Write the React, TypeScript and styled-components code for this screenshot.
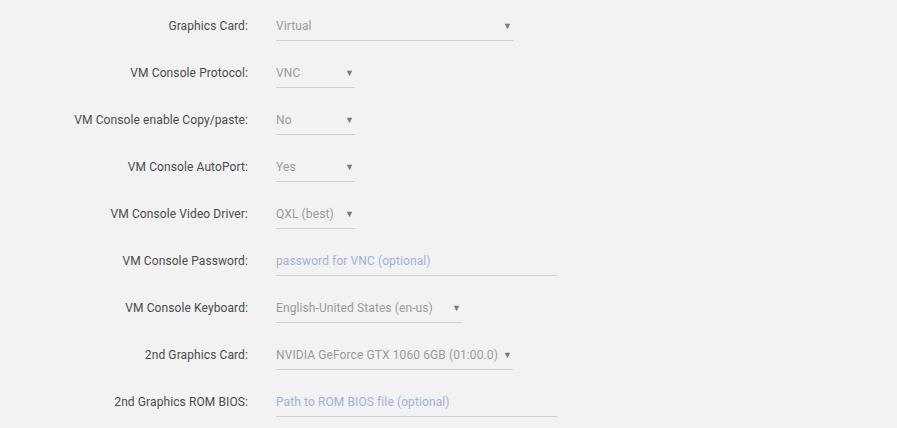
import React, { FC } from "react";
import styled, { createGlobalStyle } from "styled-components";

const GlobalStyle = createGlobalStyle`
  html, body {
    margin: 0;
    padding: 0;
    background: #f2f2f2;
  }
  body {
    font-family: Roboto, "Liberation Sans", Arial, sans-serif;
    font-size: 12px;
    letter-spacing: 0.1px;
  }
`;

interface Field {
  label: string;
  kind: "select" | "input";
  value: string;
  width: number;
}

const fields: Field[] = [
  { label: "Graphics Card:", kind: "select", value: "Virtual", width: 237 },
  { label: "VM Console Protocol:", kind: "select", value: "VNC", width: 79 },
  { label: "VM Console enable Copy/paste:", kind: "select", value: "No", width: 79 },
  { label: "VM Console AutoPort:", kind: "select", value: "Yes", width: 79 },
  { label: "VM Console Video Driver:", kind: "select", value: "QXL (best)", width: 79 },
  { label: "VM Console Password:", kind: "input", value: "password for VNC (optional)", width: 281 },
  { label: "VM Console Keyboard:", kind: "select", value: "English-United States (en-us)", width: 186 },
  { label: "2nd Graphics Card:", kind: "select", value: "NVIDIA GeForce GTX 1060 6GB (01:00.0)", width: 237 },
  { label: "2nd Graphics ROM BIOS:", kind: "input", value: "Path to ROM BIOS file (optional)", width: 281 },
];

const App: FC = () => (
  <>
    <GlobalStyle />
    <Form>
      {fields.map((f) => (
        <Row key={f.label}>
          <Label>{f.label}</Label>
          {f.kind === "select" ? (
            <Select $width={f.width}>
              <Value>{f.value}</Value>
              <Arrow>▼</Arrow>
            </Select>
          ) : (
            <Input $width={f.width}>{f.value}</Input>
          )}
        </Row>
      ))}
    </Form>
  </>
);

export default App;

const Form = styled.div`
  display: flex;
  flex-direction: column;
  gap: 19px;
  padding-top: 13px;
`;
const Row = styled.div`
  display: grid;
  grid-template-columns: 248px auto;
  column-gap: 28px;
  align-items: start;
  height: 28px;
`;
const Label = styled.div`
  text-align: right;
  color: #4a4a4a;
  white-space: nowrap;
  line-height: 26px;
`;
const Select = styled.div<{ $width: number }>`
  width: ${({ $width }) => $width}px;
  height: 28px;
  padding-bottom: 2px;
  box-sizing: border-box;
  display: flex;
  align-items: center;
  justify-content: space-between;
  border-bottom: 1px solid #cfcfcf;
  color: #9a9a9a;
`;
const Value = styled.span`
  white-space: nowrap;
`;
const Arrow = styled.span`
  font-size: 9px;
  color: #7a7a7a;
  padding-right: 1px;
`;
const Input = styled.div<{ $width: number }>`
  width: ${({ $width }) => $width}px;
  height: 28px;
  padding-bottom: 2px;
  box-sizing: border-box;
  display: flex;
  align-items: center;
  border-bottom: 1px solid #cfcfcf;
  color: #9fb0d8;
  white-space: nowrap;
`;
